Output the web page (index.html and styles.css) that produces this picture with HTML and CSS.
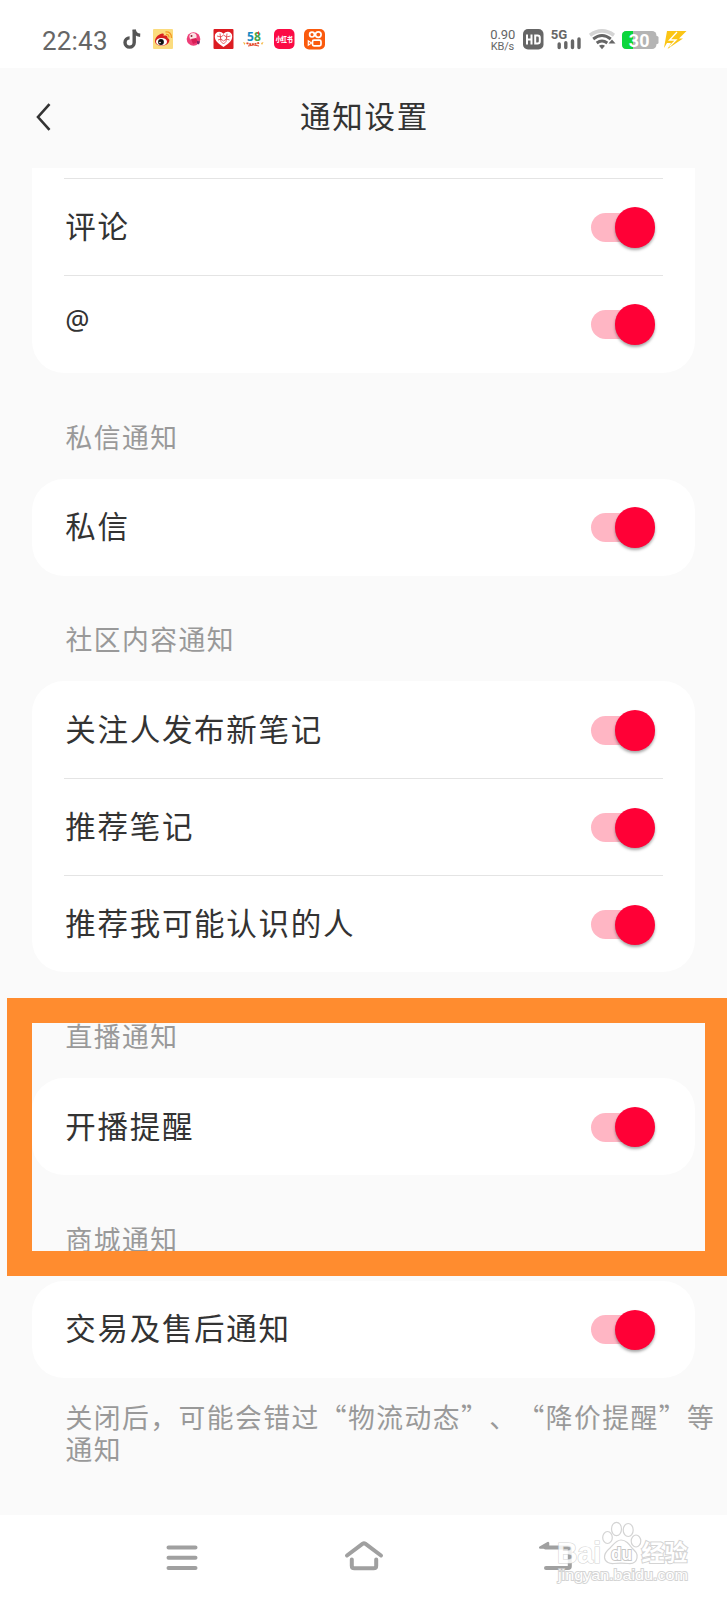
FILE: index.html
```html
<!DOCTYPE html>
<html lang="zh-CN">
<head>
<meta charset="utf-8">
<title>通知设置</title>
<link rel="stylesheet" href="styles.css">
</head>
<body>
<div class="screen">
  <div class="status">
    <span class="clock">22:43</span>
    <svg class="apps" width="210" height="30" viewBox="120 24 210 30">
      <g fill="none" stroke="#555" stroke-width="3.4"><path d="M134.2 29.5v13a4.6 4.6 0 1 1-4.6-4.6"/><path d="M134.2 30c.5 3.300 2.600 5 6 5.200"/></g>
      <rect x="153" y="29" width="20" height="20" rx="1" fill="#fbdc7e"/>
      <path d="M155 41c0-4 5-8 8-7.500 1 0 1 1.500.5 2.500 2.500-1 4.500 0 4 2 2 .5 2.500 2.500 1.200 4.500-2.700 4.500-13.700 4.500-13.700-1.500z" fill="#d8201f"/>
      <ellipse cx="161.500" cy="41.800" rx="5.500" ry="3.800" fill="#fff"/><circle cx="161" cy="42" r="2.900" fill="#111"/><circle cx="160" cy="42.500" r=".8" fill="#fff"/>
      <path d="M166 34.500q3-.5 3 3M165.500 32q6-.5 6 6" fill="none" stroke="#f39a25" stroke-width="1.300"/>
      <circle cx="193.500" cy="39" r="6.800" fill="#ee3f78"/><circle cx="193" cy="36.500" r="3.600" fill="#fbe3e6"/><circle cx="191.500" cy="36" r="1" fill="#823"/><path d="M191 39l5-1 2 4-5 2z" fill="#d91e55"/><path d="M197 41l3 .5-1 3-2-1z" fill="#7b2366"/>
      <rect x="213.500" y="29" width="20" height="20" rx="1" fill="#dc1c22"/>
      <path d="M223.500 47c-6-4-8.700-6.500-8.700-10.800 0-5 6-6 8.700-2.400 2.700-3.600 8.700-2.600 8.700 2.400 0 4.300-2.700 6.800-8.700 10.800z" fill="#fff"/>
      <path d="M217 36l4 1 2.500-2 3 2 4-1M218 40l3-1 2.500 2 3-2 3 1M220 33.500l1 8 2.500 2.500 2.500-2.500 1-8" fill="none" stroke="#dc1c22" stroke-width=".7"/>
      <text x="247" y="40.500" class="i58"><tspan fill="#168ac4">5</tspan><tspan fill="#46a54a">8</tspan></text>
      <path d="M257 33l2-2v4z" fill="#e33"/><path d="M246.500 43.200q7 2 13-.5" fill="none" stroke="#e44c2d" stroke-width="1.800" stroke-dasharray="2 .7"/><path d="M248 46q6-2 11 0" fill="none" stroke="#e44c2d"/><path d="M243 42l2.500 1-1 2zM263.500 42l-2.500 1 1 2z" fill="#f5b337"/>
      <rect x="274" y="29" width="20.500" height="20" rx="5" fill="#fb0b45"/>
      <text x="284.200" y="41.500" text-anchor="middle" class="xhs" textLength="17" lengthAdjust="spacingAndGlyphs">小红书</text>
      <rect x="304" y="29" width="21" height="20.500" rx="5" fill="#fa5a0d"/>
      <g fill="none" stroke="#fff" stroke-width="1.700"><circle cx="312" cy="34.600" r="2.400"/><circle cx="318.300" cy="34.600" r="2.800"/><rect x="312.500" y="40.200" width="8.500" height="5.600" rx="1.500"/><path d="M311.500 43l-3.200-2.200v4.400z" stroke-width="1.200"/></g>
    </svg>
    <svg class="signals" width="205" height="30" viewBox="486 24 205 30">
      <g class="rate"><text x="490.200" y="39" textLength="25.200">0.90</text><text x="490.800" y="50" textLength="23.500" class="unit">KB/s</text></g>
      <rect x="523" y="29" width="20.500" height="20.500" rx="5" fill="#666"/>
      <path d="M527 34.500v10M531.500 34.500v10M527 39.500h4.500M535.200 35.500v8h2.300q2.300 0 2.300-2.300v-3.400q0-2.300-2.300-2.300z" fill="none" stroke="#fff" stroke-width="2"/>
      <text x="550.800" y="38.500" class="net" textLength="16.500" lengthAdjust="spacingAndGlyphs">5G</text>
      <path d="M559.200 44v3.600M565.800 42.800v4.800M572.500 41v6.600M579 39v8.600" stroke="#666" stroke-width="3.400" stroke-linecap="round"/>
      <g fill="none"><path d="M590 35.200q12-8.500 24 0" stroke="#d4d4d4" stroke-width="3.600"/><path d="M593.200 39q8.800-7 17.600 0" stroke="#666" stroke-width="2.900"/><path d="M596.700 43q5.300-4 10.600 0" stroke="#666" stroke-width="2.900"/></g>
      <path d="M599 45.800q3-2 6 0l-3 3.400zM608.500 43.500h7l-3.500-4z" fill="#666"/>
      <path d="M656 36h1q1.500 0 1.500 1.500v5q0 1.500-1.500 1.500h-1z" fill="#b4b4b4"/>
      <rect x="622" y="31" width="34.500" height="18" rx="4.500" fill="#b4b4b4"/><path d="M633 31h-6.500q-4.500 0-4.500 4.500v9q0 4.500 4.500 4.500h6.500z" fill="#0bd63b"/>
      <text x="639.200" y="46.500" text-anchor="middle" class="charge">30</text>
      <path d="M667 31h19.500l-7.500 7.500h4l-15.500 10.500 3.500-6h-4l-3 5z" fill="#fbc516"/><path d="M677 32l-7.500 8h6.500l-6.500 6.500" fill="none" stroke="#fff" stroke-width="1.300"/>
    </svg>
  </div>

  <header class="header">
    <svg class="back" width="18" height="32" viewBox="0 0 18 32"><path d="M14.500 3.200L3 16l11.500 12.800" fill="none" stroke="#333" stroke-width="2.600"/></svg>
    <h1 class="title">通知设置</h1>
  </header>

  <main class="list">
    <section class="card card-cut">
      <div class="row"><span>评论</span><i class="toggle"></i></div>
      <div class="row"><span class="at">@</span><i class="toggle"></i></div>
    </section>
    <h2 class="label">私信通知</h2>
    <section class="card">
      <div class="row"><span>私信</span><i class="toggle"></i></div>
    </section>
    <h2 class="label">社区内容通知</h2>
    <section class="card">
      <div class="row"><span>关注人发布新笔记</span><i class="toggle"></i></div>
      <div class="row"><span>推荐笔记</span><i class="toggle"></i></div>
      <div class="row"><span>推荐我可能认识的人</span><i class="toggle"></i></div>
    </section>
    <h2 class="label">直播通知</h2>
    <section class="card">
      <div class="row"><span>开播提醒</span><i class="toggle"></i></div>
    </section>
    <h2 class="label">商城通知</h2>
    <section class="card">
      <div class="row"><span>交易及售后通知</span><i class="toggle"></i></div>
    </section>
    <p class="note">关闭后，可能会错过“物流动态”、“降价提醒”等通知</p>
  </main>

  <nav class="nav">
    <svg width="40" height="40" viewBox="0 0 40 40"><path d="M6.500 9.500h27M6.500 19.700h27M6.500 29.900h27"/></svg>
    <svg width="40" height="40" viewBox="0 0 40 40"><path d="M3 17.500L18.800 5.600q1.200-.8 2.400 0L37 17.500M7.800 21.500v6.200q0 2.600 2.600 2.600h19.200q2.600 0 2.600-2.600v-6.200"/></svg>
    <svg class="return" width="40" height="40" viewBox="0 0 40 40"><path d="M8.500 9.500h22.500q1.800 0 1.800 1.800v17q0 1.800-1.800 1.800H9"/><path d="M3.200 9.500L11 5v4.500z" class="tip"/></svg>
  </nav>

  <div class="highlight"></div>

  <svg class="watermark" width="140" height="68" viewBox="554 1520 140 68">
    <g fill="#fff" stroke="#cdcdcd" stroke-width="1.200">
      <text x="557" y="1563" class="wm-brand" textLength="44" lengthAdjust="spacingAndGlyphs">Bai</text>
      <ellipse cx="607.500" cy="1537.500" rx="4.800" ry="6"/><ellipse cx="616.500" cy="1529" rx="5" ry="6.700"/><ellipse cx="628.200" cy="1530" rx="5" ry="6.500"/><ellipse cx="636" cy="1541" rx="4.800" ry="6"/>
      <path d="M621 1540c5 0 8 4 11 8 4 4 6 6 5 10-1 5-5 6-9 5.500-5-.6-9-.6-14 0-4 .5-9-1-9.500-6-.4-4 2-6.500 5.500-9.500 3-3 6-8 11-8z"/>
      <text x="611" y="1560" class="wm-du" textLength="21" lengthAdjust="spacingAndGlyphs">du</text>
      <text x="641.500" y="1561" class="wm-cn" textLength="46" lengthAdjust="spacingAndGlyphs">经验</text>
      <text x="558" y="1580" class="wm-url" textLength="130" lengthAdjust="spacingAndGlyphs">jingyan.baidu.com</text>
    </g>
  </svg>
</div>
</body>
</html>
```

FILE: styles.css
```css
* { box-sizing: border-box; }
body { margin: 0; background: #fafafa; }
.screen {
  position: relative;
  display: flex;
  flex-direction: column;
  width: 727px;
  height: 1600px;
  overflow: hidden;
  background: #fafafa;
  color: #333;
  font-family: "Noto Sans CJK SC", sans-serif;
  text-spacing-trim: space-all;
}

.status {
  flex: none;
  display: flex;
  align-items: center;
  height: 67.5px;
  padding: 13px 36px 2.500px 42px;
  background: #fff;
}
.clock {
  width: 78px;
  color: #666;
  font: 26px/30px Roboto, sans-serif;
  letter-spacing: .2px;
  padding-top: 4px;
}
.status svg { flex: none; }
.signals { margin-left: auto; }
.i58 { font: bold 12px "Open Sans", sans-serif; }
.xhs { font: 900 7px "Noto Sans CJK SC", sans-serif; fill: #fff; }
.rate { font: 13px Roboto, sans-serif; fill: #666; }
.unit { font-size: 11px; }
.net { font: bold 13px Roboto, sans-serif; fill: #666; }
.charge { font: bold 18px Roboto, sans-serif; fill: #fff; }

.header {
  flex: none;
  display: grid;
  grid-template-columns: 60px 1fr 60px;
  align-items: center;
  height: 100.500px;
  padding-bottom: 2px;
}
.back { margin-left: 35px; }
.title {
  margin: 0;
  padding: 0 0 4px 2px;
  text-align: center;
  font-size: 30.500px;
  font-weight: 400;
  line-height: 44px;
  letter-spacing: 1.700px;
}

.list { flex: none; height: 1346.500px; overflow: hidden; }
.card {
  margin: 0 32px;
  padding: 0 32px;
  border-radius: 32px;
  background: #fff;
}
.card-cut { height: 205px; padding-top: 10px; border-radius: 0 0 32px 32px; }
.row {
  display: flex;
  align-items: center;
  justify-content: space-between;
  height: 97px;
  padding-right: 8px;
  font-size: 30.500px;
  line-height: 44px;
  letter-spacing: 1.700px;
}
.row span { padding: 0 0 4px 1.300px; }
.row .at { padding-bottom: 8px; font: 27px/40px "Noto Sans", sans-serif; }
.row + .row, .card-cut .row { border-top: 1px solid #e4e4e4; }
.toggle {
  display: flex;
  align-items: center;
  justify-content: flex-end;
  width: 64px;
  height: 29px;
  margin-top: 1px;
  border-radius: 15px;
  background: linear-gradient(90deg, #ffb6c4 0 48px, transparent 48px);
}
.toggle::before {
  content: "";
  flex: none;
  width: 40.500px;
  height: 40.500px;
  border-radius: 50%;
  background: #ff0036;
  box-shadow: 0 2px 3px rgba(0, 0, 0, .35);
}
.label {
  height: 105.700px;
  margin: 0;
  padding: 43.500px 0 0 65.500px;
  color: #999;
  font-size: 26.800px;
  font-weight: 400;
  line-height: 40px;
  letter-spacing: 1.430px;
}
.note {
  margin: 0;
  padding: 23px 0 0 65.500px;
  color: #999;
  font-size: 26.800px;
  line-height: 32px;
  letter-spacing: 1.450px;
}

.nav {
  flex: 1;
  display: grid;
  grid-template-columns: repeat(3, 40px);
  justify-content: center;
  column-gap: 142px;
  padding-top: 23px;
  background: #fff;
}
.nav path {
  fill: none;
  stroke: #a0a0a0;
  stroke-width: 4;
  stroke-linecap: round;
  stroke-linejoin: round;
}
.nav .tip { fill: #a0a0a0; stroke-width: 2.500; }
.return { margin-left: 11px; }

.highlight {
  position: absolute;
  left: 7px;
  top: 998px;
  width: 722.500px;
  height: 278px;
  border: 25px solid #ff8c2f;
}
.watermark {
  position: absolute;
  left: 554px;
  top: 1520px;
  opacity: .85;
}
.watermark text { paint-order: stroke; }
.wm-brand { font: bold 29px "Liberation Sans", sans-serif; }
.wm-du { font: bold 19px "Liberation Sans", sans-serif; stroke: #bdbdbd; stroke-width: 2; }
.wm-cn { font: bold 23px "Noto Sans CJK SC", sans-serif; stroke-width: 2; }
.wm-url { font: 15px "Liberation Sans", sans-serif; stroke-width: 1.800; }
```
